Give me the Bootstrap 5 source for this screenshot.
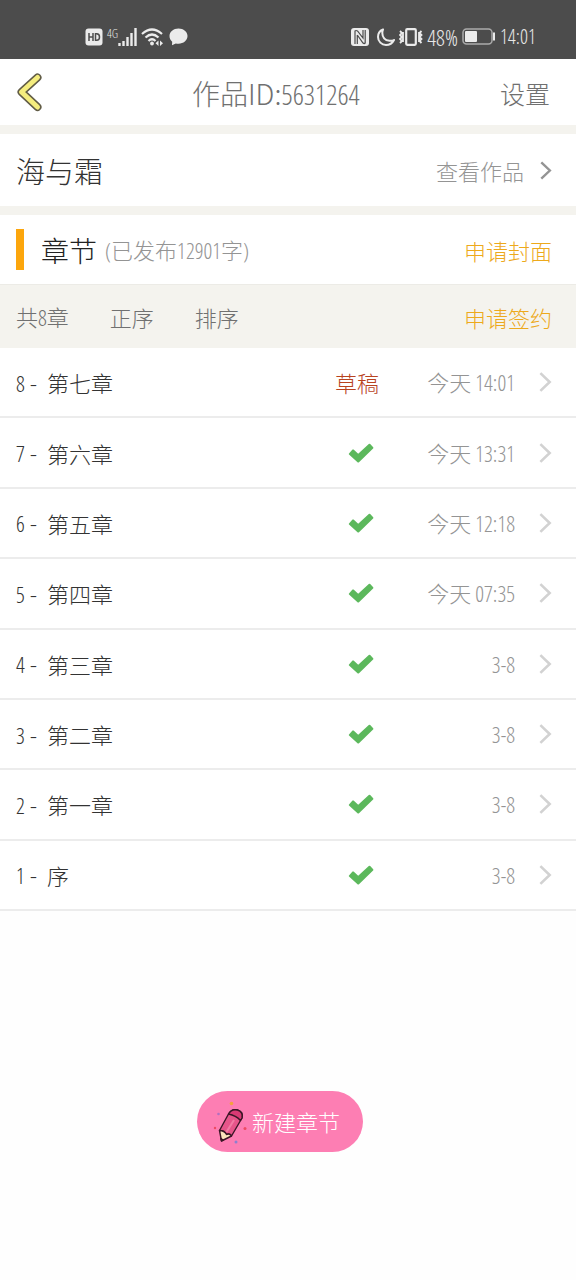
<!DOCTYPE html>
<html lang="zh-CN">
<head>
<meta charset="utf-8">
<meta name="viewport" content="width=device-width, initial-scale=1">
<title>作品管理</title>
<link href="https://cdn.jsdelivr.net/npm/bootstrap@5.3.0/dist/css/bootstrap.min.css" rel="stylesheet">
<style>
body{font-family:"Noto Sans CJK SC",sans-serif;font-weight:300;font-size:22px;line-height:32px;color:#333;background:#fefefe}
a,button{font-weight:300!important}
svg{display:block;flex:none}
.num{font-family:"Open Sans Condensed Light","Noto Sans CJK SC",sans-serif}
.tone-mid{color:#707070}
.tone-soft{color:#949494}
.tone-gold{color:#eda91c}
.tone-draft{color:#b8431f}
.statusbar{height:59px;padding:14px 40px 0 85px;background:#4c4c4c;color:#e8e8e8;font-size:20px}
.net{font-size:12px;line-height:12px}
.level{font-size:22px}
.topbar{height:66px;padding:2px 26px 0 16px;display:grid;grid-template-columns:176px auto 1fr;background:#fff}
.topbar h1{font-size:28px;line-height:40px;font-weight:300}
.plain{padding:0;border:0;background:none;line-height:32px}
.set{font-size:25px}
.band{height:9px;background:#f4f3ee}
.pad{padding-left:16px;padding-right:24px}
.work{height:72px}
.work h2{font-size:29px;line-height:40px;font-weight:300}
.chap{height:69px}
.chap h2{font-size:28px;line-height:40px;font-weight:300;color:#222}
.marker{width:8px;height:41px;background:#fca60d;margin-right:17px}
.tools{height:64px;background:#f4f3ee;border-top:1px solid #ecebe6}
.tools .plain{font-size:22px}
.gap-wide{gap:41px}
.chapters{display:grid;grid-auto-rows:1fr;min-height:563px}
.chapter{border-bottom:2px solid #ececec;color:#333;background:#fff}
.order{width:31px}
.state{width:60px;display:flex;justify-content:center}
.state svg{margin-left:8px}
.when{width:128px;text-align:right}
.go{color:#d2d2d2}
.create{height:61px;padding:0 22px 0 15px;background:#fd7eb3;color:#fff;font-size:22px;gap:4px;margin-bottom:128px;margin-right:16px}
.create:hover{background:#f56ca5;color:#fff}
</style>
</head>
<body class="d-flex flex-column min-vh-100">
<svg class="d-none" aria-hidden="true">
  <symbol id="tick" viewBox="0 0 26 20"><path fill="#5cb85c" d="M1 10.500 4.500 6.600Q5 6.200 5.600 6.600L10.200 10.800 20.800.9Q21.500.4 22.200 1L25.200 4.300Q25.700 5 25.100 5.600L11 19.200Q10.200 19.700 9.500 19.200L1 11.600Q.5 11 1 10.500Z"/></symbol>
  <symbol id="next" viewBox="0 0 14 22"><path fill="none" stroke="currentColor" stroke-width="2.800" d="M1.500 1.500 11.500 11 1.500 20.500"/></symbol>
</svg>

<div class="statusbar d-flex justify-content-between align-items-center">
  <div class="d-flex align-items-start">
    <svg width="18" height="18" viewBox="0 0 18 18"><rect x=".5" y=".5" width="17" height="17" rx="3" fill="#ebebeb"/><path d="M4 5v8M8 5v8M4 9h4M10.500 5.700v6.600h1.200q2.800 0 2.800-3.300t-2.800-3.300Z" fill="none" stroke="#4c4c4c" stroke-width="1.500"/></svg>
    <span class="net num ms-1">4G</span>
    <svg width="19" height="18" viewBox="0 0 19 18"><path d="M1.500 18v-3M5.500 18v-5M9.500 18V9M13.500 18V5M17.500 18V0" fill="none" stroke="#ebebeb" stroke-width="2.400"/></svg>
    <svg class="ms-1" width="24" height="18" viewBox="0 0 24 18"><g fill="none" stroke="#ebebeb" stroke-width="2.200"><path d="M1 6Q11 -3 21 6M4.500 9.500q6.500-6 13 0M7.500 13q3.500-3.500 7 0"/></g><circle cx="11" cy="15.500" r="1.900" fill="#ebebeb"/><path d="m17.500 12.500-3 2.800 3 2.700Zm1.500 0 3 2.800-3 2.700Z" fill="#ebebeb"/></svg>
    <svg class="ms-1" width="19" height="18" viewBox="0 0 19 18"><path fill="#ebebeb" d="M9.500.5c5 0 9 3.300 9 7.600s-4 7.700-9 7.700q-1.500 0-2.700-.3L3 17.300l.2-3.500C1.500 12.400.5 10.400.5 8.100c0-4.300 4-7.600 9-7.600Z"/></svg>
  </div>
  <div class="d-flex align-items-center num">
    <svg width="18" height="18" viewBox="0 0 18 18"><rect width="18" height="18" rx="3" fill="#ebebeb"/><path d="M4 16V3q1-1 2.500 0L12 10V2M6.300 7v9M6.300 7l5.700 8q1.200 1 2.200 0V2" fill="none" stroke="#4c4c4c" stroke-width="1.200"/></svg>
    <svg class="ms-2" width="18" height="18" viewBox="0 0 18 18"><path d="M6 1.500Q1 3.500 1 9a8 8 0 0 0 8 8q5.500 0 8-5-1.500 1-4.500.8Q5.500 12 5.300 5 5.300 3 6 1.500Z" fill="none" stroke="#ebebeb" stroke-width="2" stroke-linejoin="round"/></svg>
    <svg class="ms-1" width="24" height="18" viewBox="0 0 24 18"><g fill="none" stroke="#ebebeb"><rect x="7.200" y="1.200" width="9.600" height="15.600" rx="1" stroke-width="2.200"/><path stroke-width="1.800" d="m1 3 2 2-2 2 2 2-2 2 2 2-2 2M4 4v10M22.500 3l-2 2 2 2-2 2 2 2-2 2 2 2M20 4v10"/></g></svg>
    <span class="level ms-1">48%</span>
    <svg class="ms-1" width="34" height="17" viewBox="0 0 34 17"><rect x="1" y="1" width="29" height="15" rx="3.500" fill="none" stroke="#aaa" stroke-width="1.500"/><rect x="3" y="3" width="12" height="11" rx="1" fill="#ebebeb"/><rect x="31" y="4.500" width="2" height="8" fill="#ebebeb"/></svg>
    <span class="ms-1">14:01</span>
  </div>
</div>

<header class="topbar align-items-center">
  <button class="btn plain text-start" type="button" aria-label="返回">
    <svg width="27" height="40" viewBox="0 0 27 40"><g fill="none" stroke-linecap="round" stroke-linejoin="round"><path stroke="#615c46" stroke-width="8" d="M21.500 4.500 5.500 19l16 15"/><path stroke="#f5ed7e" stroke-width="5" d="M21.500 4.500 5.500 19l16 15"/></g></svg>
  </button>
  <h1 class="m-0 tone-mid">作品ID:<span class="num">5631264</span></h1>
  <button class="btn plain set tone-mid text-end" type="button">设置</button>
</header>
<div class="band"></div>

<section class="work pad d-flex align-items-center justify-content-between bg-white">
  <h2 class="m-0">海与霜</h2>
  <a href="#" class="tone-soft text-decoration-none d-flex align-items-center">查看作品
    <svg class="ms-3" width="12" height="19" viewBox="0 0 14 22"><use href="#next"/></svg></a>
</section>
<div class="band"></div>

<main>
  <div class="chap pad d-flex align-items-center bg-white">
    <span class="marker"></span>
    <h2 class="m-0">章节</h2>
    <span class="tone-soft ms-2 num">(已发布12901字)</span>
    <a href="#" class="tone-gold text-decoration-none ms-auto">申请封面</a>
  </div>
  <div class="tools pad d-flex align-items-center gap-wide tone-mid">
    <span class="num">共8章</span>
    <button class="btn plain tone-mid" type="button">正序</button>
    <button class="btn plain tone-mid" type="button">排序</button>
    <a href="#" class="tone-gold text-decoration-none ms-auto">申请签约</a>
  </div>
  <nav class="chapters" aria-label="章节列表">
    <a href="#" class="chapter pad d-flex align-items-center text-decoration-none"><span class="order"><span class="num">8</span> -</span><span class="flex-grow-1">第七章</span><span class="state tone-draft">草稿</span><span class="when tone-soft num">今天 14:01</span><svg class="go ms-4" width="13" height="22"><use href="#next"/></svg></a>
    <a href="#" class="chapter pad d-flex align-items-center text-decoration-none"><span class="order"><span class="num">7</span> -</span><span class="flex-grow-1">第六章</span><span class="state"><svg width="26" height="20"><use href="#tick"/></svg></span><span class="when tone-soft num">今天 13:31</span><svg class="go ms-4" width="13" height="22"><use href="#next"/></svg></a>
    <a href="#" class="chapter pad d-flex align-items-center text-decoration-none"><span class="order"><span class="num">6</span> -</span><span class="flex-grow-1">第五章</span><span class="state"><svg width="26" height="20"><use href="#tick"/></svg></span><span class="when tone-soft num">今天 12:18</span><svg class="go ms-4" width="13" height="22"><use href="#next"/></svg></a>
    <a href="#" class="chapter pad d-flex align-items-center text-decoration-none"><span class="order"><span class="num">5</span> -</span><span class="flex-grow-1">第四章</span><span class="state"><svg width="26" height="20"><use href="#tick"/></svg></span><span class="when tone-soft num">今天 07:35</span><svg class="go ms-4" width="13" height="22"><use href="#next"/></svg></a>
    <a href="#" class="chapter pad d-flex align-items-center text-decoration-none"><span class="order"><span class="num">4</span> -</span><span class="flex-grow-1">第三章</span><span class="state"><svg width="26" height="20"><use href="#tick"/></svg></span><span class="when tone-soft num">3-8</span><svg class="go ms-4" width="13" height="22"><use href="#next"/></svg></a>
    <a href="#" class="chapter pad d-flex align-items-center text-decoration-none"><span class="order"><span class="num">3</span> -</span><span class="flex-grow-1">第二章</span><span class="state"><svg width="26" height="20"><use href="#tick"/></svg></span><span class="when tone-soft num">3-8</span><svg class="go ms-4" width="13" height="22"><use href="#next"/></svg></a>
    <a href="#" class="chapter pad d-flex align-items-center text-decoration-none"><span class="order"><span class="num">2</span> -</span><span class="flex-grow-1">第一章</span><span class="state"><svg width="26" height="20"><use href="#tick"/></svg></span><span class="when tone-soft num">3-8</span><svg class="go ms-4" width="13" height="22"><use href="#next"/></svg></a>
    <a href="#" class="chapter pad d-flex align-items-center text-decoration-none"><span class="order"><span class="num">1</span> -</span><span class="flex-grow-1">序</span><span class="state"><svg width="26" height="20"><use href="#tick"/></svg></span><span class="when tone-soft num">3-8</span><svg class="go ms-4" width="13" height="22"><use href="#next"/></svg></a>
  </nav>
</main>

<button class="btn create rounded-pill d-flex align-items-center align-self-center mt-auto" type="button">
  <svg width="35" height="44" viewBox="0 0 35 44"><circle cx="18.500" cy="3.500" r="1.800" fill="#f4a13c"/><circle cx="5.500" cy="14" r="1.300" fill="#b070c0"/><circle cx="2" cy="28" r="1.200" fill="#ee4a63"/><circle cx="32" cy="28.500" r="1.500" fill="#ee4a63"/><circle cx="23" cy="42" r="1.500" fill="#8e7fce"/>
    <g stroke="#3a1626" stroke-width="1.400" stroke-linejoin="round"><path fill="#e6558a" d="M6.500 30.500 15.500 14q3-5.500 9-4 6 2 4.500 8L18.500 36q-2-3-5-1.500-2-4-7-4Z"/><path fill="#fbe3bd" d="M6.500 30.500q5 0 7 4 3-1.500 5 1.500L8.500 41Z"/><path fill="#d93a74" d="M15.500 14q3-5.500 9-4 6 2 4.500 8l-1.500 2.500q-4.500-5-12-6.500Z"/><path d="m7.800 38.500 2.500 1.500-1.800 1Z" fill="#3a1626"/></g><path d="m21 20-7.500 12" stroke="#f27ba4" stroke-width="2"/></svg>
  <span>新建章节</span>
</button>
<script src="https://cdn.jsdelivr.net/npm/bootstrap@5.3.0/dist/js/bootstrap.bundle.min.js"></script>
</body>
</html>
